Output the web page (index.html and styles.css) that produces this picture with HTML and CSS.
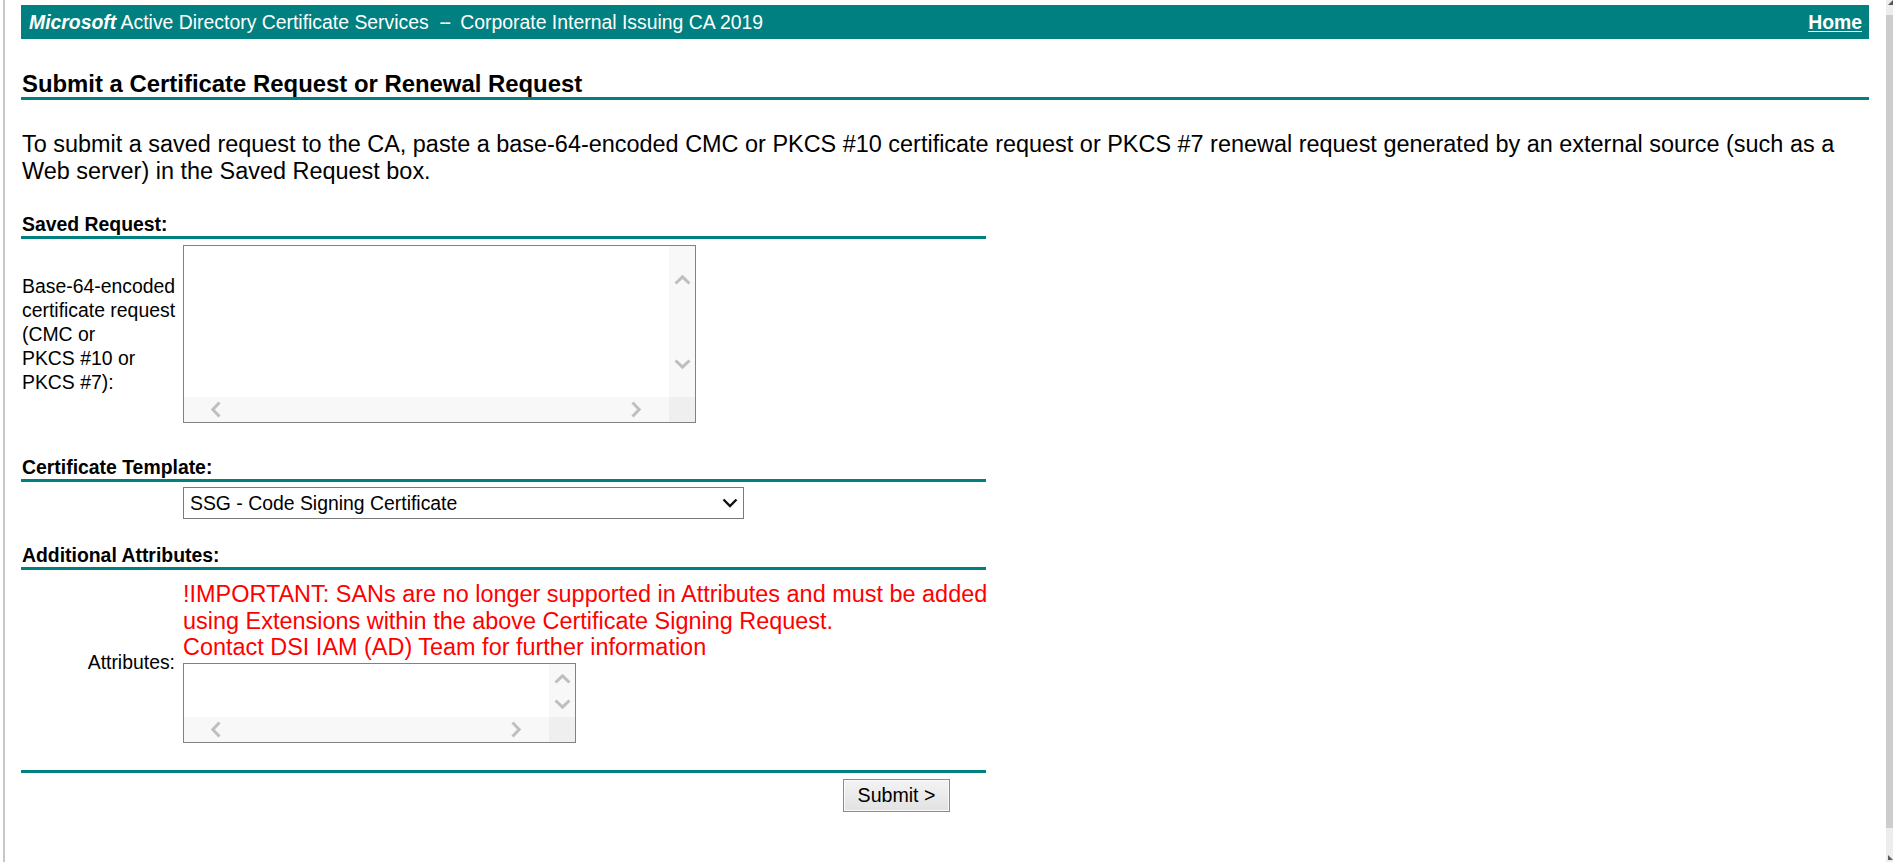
FILE: index.html
```html
<!DOCTYPE html>
<html lang="en">
<head>
<meta charset="utf-8">
<title>Microsoft Active Directory Certificate Services</title>
<link rel="stylesheet" href="styles.css">
</head>
<body>
<div class="frame">
  <header class="topbar">
    <span class="brand"><b><i>Microsoft</i></b> Active Directory Certificate Services</span>
    <span class="ca-name">&nbsp;&nbsp;<span class="dash">--</span>&nbsp;&nbsp;Corporate Internal Issuing CA 2019</span>
    <a class="home" href="#">Home</a>
  </header>

  <h1 class="page-title">Submit a Certificate Request or Renewal Request</h1>

  <p class="desc">To submit a saved request to the CA, paste a base-64-encoded CMC or PKCS #10 certificate request or PKCS #7 renewal request generated by an external source (such as a Web server) in the Saved Request box.</p>

  <form class="req-form">
    <div class="section-head">Saved Request:</div>
    <div class="field-row row-saved">
      <label class="field-label">Base-64-encoded<br>certificate request<br>(CMC or<br>PKCS #10 or<br>PKCS #7):</label>
      <div class="ta ta-lg">
        <textarea class="ta-input"></textarea>
        <div class="ta-vbar">
          <svg class="chev" width="17" height="10" viewBox="0 0 17 10"><polyline points="1.5,8.5 8.5,1.8 15.5,8.5"/></svg>
          <svg class="chev" width="17" height="10" viewBox="0 0 17 10"><polyline points="1.5,1.5 8.5,8.2 15.5,1.5"/></svg>
        </div>
        <div class="ta-hbar">
          <svg class="chev" width="10" height="17" viewBox="0 0 10 17"><polyline points="8.5,1.5 1.8,8.5 8.5,15.5"/></svg>
          <svg class="chev" width="10" height="17" viewBox="0 0 10 17"><polyline points="1.5,1.5 8.2,8.5 1.5,15.5"/></svg>
        </div>
        <div class="ta-corner"></div>
      </div>
    </div>

    <div class="section-head head-template">Certificate Template:</div>
    <div class="field-row row-template">
      <span class="field-label"></span>
      <div class="select-wrap">
        <select class="select">
          <option>SSG - Code Signing Certificate</option>
        </select>
        <svg class="select-arrow" width="16" height="10" viewBox="0 0 16 10"><polyline points="1.5,1.5 8,8 14.5,1.5"/></svg>
      </div>
    </div>

    <div class="section-head head-attrs">Additional Attributes:</div>
    <div class="field-row row-attrs">
      <label class="field-label label-right">Attributes:</label>
      <div class="attrs-cell">
        <p class="warning">!IMPORTANT: SANs are no longer supported in Attributes and must be added<br>using Extensions within the above Certificate Signing Request.<br>Contact DSI IAM (AD) Team for further information</p>
        <div class="ta ta-sm">
          <textarea class="ta-input"></textarea>
          <div class="ta-vbar">
            <svg class="chev" width="17" height="10" viewBox="0 0 17 10"><polyline points="1.5,8.5 8.5,1.8 15.5,8.5"/></svg>
            <svg class="chev" width="17" height="10" viewBox="0 0 17 10"><polyline points="1.5,1.5 8.5,8.2 15.5,1.5"/></svg>
          </div>
          <div class="ta-hbar">
            <svg class="chev" width="10" height="17" viewBox="0 0 10 17"><polyline points="8.5,1.5 1.8,8.5 8.5,15.5"/></svg>
            <svg class="chev" width="10" height="17" viewBox="0 0 10 17"><polyline points="1.5,1.5 8.2,8.5 1.5,15.5"/></svg>
          </div>
          <div class="ta-corner"></div>
        </div>
      </div>
    </div>

    <div class="form-rule"></div>
    <div class="actions">
      <button type="button" class="btn-submit">Submit &gt;</button>
    </div>
  </form>
</div>

<div class="win-scroll">
  <div class="win-scroll-up"></div>
  <div class="win-scroll-thumb"></div>
  <div class="win-scroll-down"></div>
</div>
</body>
</html>
```

FILE: styles.css
```css
* { box-sizing: border-box; }

html, body {
  margin: 0;
  padding: 0;
  background: #ffffff;
}

body {
  font-family: "Liberation Sans", Arial, sans-serif;
  font-size: 23.45px;
  color: #000000;
  overflow: hidden;
}

.frame {
  margin-left: 3px;
  border-left: 2px solid #c8c8c8;
  min-height: 862px;
  padding: 5px 24px 0 16px;
}

/* ---------- top bar ---------- */
.topbar {
  display: flex;
  align-items: center;
  height: 34px;
  background: #008080;
  color: #ffffff;
  font-size: 19.4px;
  padding: 0 7px 0 8px;
  white-space: nowrap;
}

.dash { letter-spacing: -1.5px; }

.home {
  margin-left: auto;
  color: #ffffff;
  font-weight: bold;
  text-decoration: underline;
  text-underline-offset: 2px;
}

/* ---------- title & description ---------- */
.page-title {
  margin: 31px 0 0;
  padding: 0 0 0 1px;
  font-size: 23.9px;
  font-weight: bold;
  line-height: 27px;
  border-bottom: 3px solid #008080;
}

.desc {
  margin: 30.5px 0 0;
  padding-left: 1px;
  line-height: 27px;
}

/* ---------- form ---------- */
.req-form {
  width: 965px;
}

.section-head {
  margin-top: 27.5px;
  padding-left: 1px;
  font-size: 19.4px;
  font-weight: bold;
  line-height: 24px;
  border-bottom: 3px solid #008080;
}

.head-template { margin-top: 32px; }
.head-attrs { margin-top: 24px; }

.field-row {
  display: grid;
  grid-template-columns: 162px auto;
  align-items: center;
  justify-items: start;
}

.row-saved { margin-top: 6px; }
.row-template { margin-top: 5px; }
.row-attrs { margin-top: 11px; }

.field-label {
  padding-left: 1px;
  font-size: 19.4px;
  line-height: 24px;
}

.label-right {
  justify-self: end;
  padding: 0 8px 0 0;
}

/* ---------- fake IE textareas ---------- */
.ta {
  display: grid;
  grid-template-columns: 1fr 26px;
  grid-template-rows: 1fr 25px;
  border: 1px solid #828282;
  background: #ffffff;
}

.ta-lg { width: 513px; height: 178px; }
.ta-sm { width: 393px; height: 80px; }

.ta-input {
  border: 0;
  margin: 0;
  padding: 2px 4px;
  resize: none;
  overflow: hidden;
  outline: none;
  font-family: "Liberation Mono", monospace;
  font-size: 16px;
  background: #ffffff;
}

.ta-vbar {
  display: flex;
  flex-direction: column;
  align-items: center;
  justify-content: space-between;
  background: #f8f8f8;
}

.ta-lg .ta-vbar { padding: 29px 0 28px; }
.ta-sm .ta-vbar { padding: 10px 0 8px; }

.ta-hbar {
  display: flex;
  align-items: center;
  justify-content: space-between;
  padding: 0 28px 0 27px;
  background: #f8f8f8;
}

.ta-corner {
  background: #efefef;
}

.chev polyline {
  fill: none;
  stroke: #bfbfbf;
  stroke-width: 3;
}

/* ---------- select ---------- */
.select-wrap {
  position: relative;
}

.select {
  display: block;
  width: 561px;
  height: 32px;
  margin: 0;
  padding: 0 0 0 6px;
  border: 1px solid #7a7a7a;
  border-radius: 0;
  background: #ffffff;
  color: #000000;
  font-family: "Liberation Sans", Arial, sans-serif;
  font-size: 19.4px;
  appearance: none;
  -webkit-appearance: none;
}

.select-arrow {
  position: absolute;
  right: 6px;
  top: 11px;
  pointer-events: none;
}

.select-arrow polyline {
  fill: none;
  stroke: #111111;
  stroke-width: 2.4;
}

/* ---------- attributes ---------- */
.attrs-cell {
  display: flex;
  flex-direction: column;
  align-items: flex-start;
}

.warning {
  margin: 0;
  color: #ff0000;
  line-height: 26.5px;
  white-space: nowrap;
}

.attrs-cell .ta { margin-top: 2px; }

/* ---------- actions ---------- */
.form-rule {
  margin-top: 27px;
  border-top: 3px solid #008080;
}

.actions {
  display: flex;
  justify-content: flex-end;
  padding-right: 36px;
  margin-top: 6px;
}

.btn-submit {
  width: 107px;
  height: 33px;
  margin: 0;
  padding: 0;
  border: 1px solid #8a8a8a;
  border-radius: 0;
  background: linear-gradient(#f3f3f3, #e2e2e2);
  box-shadow: inset 0 0 0 1px #fbfbfb;
  color: #000000;
  font-family: "Liberation Sans", Arial, sans-serif;
  font-size: 19.6px;
}

/* ---------- window scrollbar (cut off at right edge) ---------- */
.win-scroll {
  position: fixed;
  top: 0;
  right: 0;
  width: 7px;
  height: 862px;
  background: #ededed;
}

.win-scroll-up {
  position: absolute;
  top: 0;
  left: 2px;
  width: 0;
  height: 0;
  border-left: 5px solid transparent;
  border-bottom: 5px solid #5a5a5a;
}

.win-scroll-thumb {
  position: absolute;
  top: 15px;
  bottom: 34px;
  left: 0;
  right: 0;
  background: #cdcdcd;
}

.win-scroll-down {
  position: absolute;
  bottom: 2px;
  left: 2px;
  width: 0;
  height: 0;
  border-left: 5px solid #5a5a5a;
  border-top: 5px solid transparent;
}
```
